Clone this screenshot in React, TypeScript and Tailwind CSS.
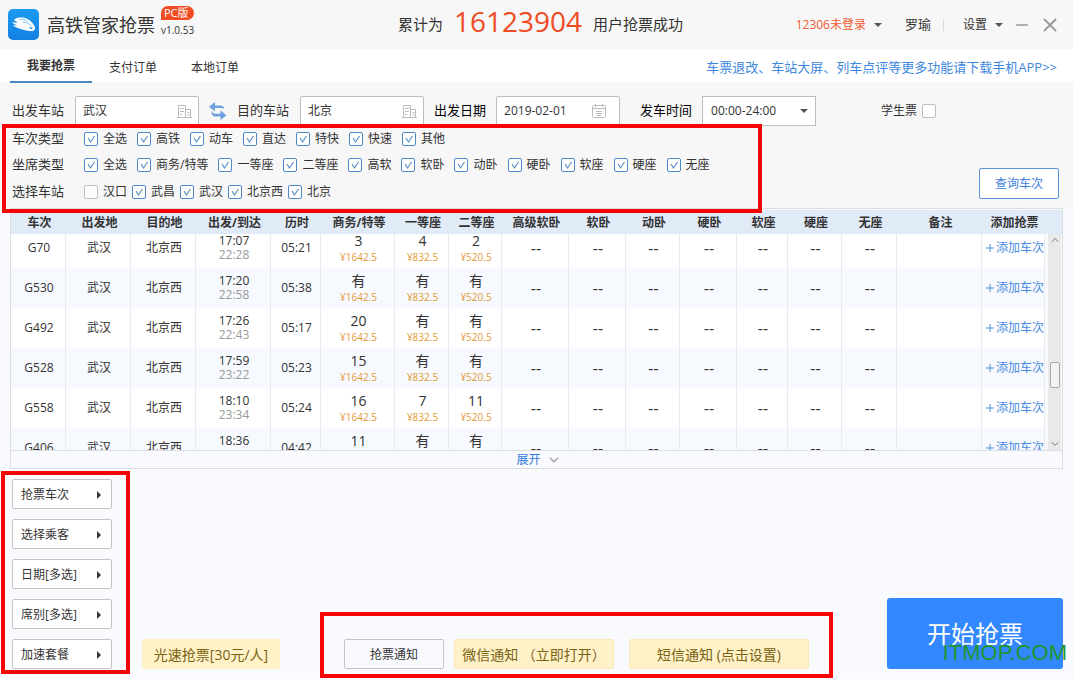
import { useEffect, useRef, useState } from 'react';
import { ChevronDown, ChevronUp, Minus, Plus, X } from 'lucide-react';

const TABS = ['我要抢票', '支付订单', '本地订单'];

const TRAIN_TYPES = ['全选', '高铁', '动车', '直达', '特快', '快速', '其他'];
const SEAT_TYPES = ['全选', '商务/特等', '一等座', '二等座', '高软', '软卧', '动卧', '硬卧', '软座', '硬座', '无座'];
const STATIONS = ['汉口', '武昌', '武汉', '北京西', '北京'];

const COLUMNS = [
    { title: '车次', width: 55 },
    { title: '出发地', width: 65 },
    { title: '目的地', width: 65 },
    { title: '出发/到达', width: 75 },
    { title: '历时', width: 50 },
    { title: '商务/特等', width: 74 },
    { title: '一等座', width: 54 },
    { title: '二等座', width: 53 },
    { title: '高级软卧', width: 67 },
    { title: '软卧', width: 57 },
    { title: '动卧', width: 54 },
    { title: '硬卧', width: 57 },
    { title: '软座', width: 51 },
    { title: '硬座', width: 54 },
    { title: '无座', width: 55 },
    { title: '备注', width: 85 },
    { title: '添加抢票', width: 63 },
];

const TRAINS = [
    { no: 'G70', start: '17:07', end: '22:28', duration: '05:21', seats: ['3', '4', '2'] },
    { no: 'G530', start: '17:20', end: '22:58', duration: '05:38', seats: ['有', '有', '有'] },
    { no: 'G492', start: '17:26', end: '22:43', duration: '05:17', seats: ['20', '有', '有'] },
    { no: 'G528', start: '17:59', end: '23:22', duration: '05:23', seats: ['15', '有', '有'] },
    { no: 'G558', start: '18:10', end: '23:34', duration: '05:24', seats: ['16', '7', '11'] },
    { no: 'G406', start: '18:36', end: '23:18', duration: '04:42', seats: ['11', '有', '有'] },
];

const PRICES = ['¥1642.5', '¥832.5', '¥520.5'];
const EMPTY_SEATS = ['高级软卧', '软卧', '动卧', '硬卧', '软座', '硬座', '无座'];

const STEPS = ['抢票车次', '选择乘客', '日期[多选]', '席别[多选]', '加速套餐'];

function Caret({ className = '' }: { className?: string }) {
    return (
        <svg viewBox="0 0 8 4" className={`w-2 h-1 fill-[#555] ${className}`} aria-hidden="true">
            <path d="M0 0h8L4 4z" />
        </svg>
    );
}

function Logo() {
    return (
        <svg viewBox="0 0 31 31" className="w-[31px] h-[31px] shrink-0" aria-hidden="true">
            <defs>
                <linearGradient id="logo-bg" x1="0" y1="0" x2="0" y2="1">
                    <stop offset="0" stopColor="#1c9bf2" />
                    <stop offset="1" stopColor="#1480e2" />
                </linearGradient>
            </defs>
            <rect width="31" height="31" rx="5" fill="url(#logo-bg)" />
            {/* Train nose */}
            <path d="M6 10.500C10 8 15.500 8 19.500 10c4 2 6.800 5.500 7.500 8.500.6 2.800-2 4-5.500 3.500-6-.9-12-2.500-17-5.500 2 .2 3.500.1 4.500-.3-2-.6-4-1.700-5.200-3.200 2.200.7 4.200.8 5.700.4C8 12.800 6.800 11.800 6 10.500z" fill="#fff" />
            <path d="M11.500 10.800c2.800-.8 5.800-.3 8.200 1.500M14.500 13.200c4 0 7.300 1.500 9.300 4.300" fill="none" stroke="#5db4f5" strokeWidth="0.8" />
            <path d="M20.500 17.800l4.500 1.200-2 1.200z" fill="#1a8eea" />
        </svg>
    );
}

function CityIcon() {
    return (
        <svg viewBox="0 0 16 16" className="w-4 h-4 shrink-0" fill="none" stroke="#bcbcbc" aria-hidden="true">
            <path d="M1.500 14.500v-12h7v12M8.500 6.500h5v8M0 14.500h15" />
            <path d="M3 5.500h4M3 8.500h4M3 11.500h2M10.500 9.500h2M10.500 12h2" />
        </svg>
    );
}

function CalendarIcon() {
    return (
        <svg viewBox="0 0 16 16" className="w-4 h-4 shrink-0" fill="none" stroke="#bcbcbc" aria-hidden="true">
            <rect x="1.500" y="2.500" width="13" height="12" rx="1" />
            <path d="M1.500 5.500h13M4.500 1v3M11.500 1v3M5 8.500h6M5 10.500h6M6 12.500h4" />
        </svg>
    );
}

function SwapIcon() {
    return (
        <svg viewBox="0 0 20 18" className="w-5 h-[18px] fill-[#6f9fdc]" aria-hidden="true">
            <path d="M7 0v3.500h5.500c2 0 3.500 1.200 4 3.500-1.200-.8-2.500-1-4-1H7V9.500L1 4.800z" />
            <path d="M12.500 8.500v3.300H7.500c-2 0-3.500-1.300-4-3.600-.6 3.800 1 6.300 4 6.300h5V18l6-4.700z" />
        </svg>
    );
}

function CheckBox({ label, defaultChecked = true }: { label: string; defaultChecked?: boolean }) {
    return (
        <label className="flex items-center gap-[5px] text-xs text-[#333] whitespace-nowrap">
            <span className="grid">
                <input
                    type="checkbox"
                    defaultChecked={defaultChecked}
                    className="peer col-start-1 row-start-1 appearance-none w-3.5 h-3.5 bg-white border border-[#bdbdbd] checked:border-[#4f8ac8] rounded-[2px]"
                />
                <svg viewBox="0 0 14 14" className="col-start-1 row-start-1 w-3.5 h-3.5 invisible peer-checked:visible pointer-events-none" fill="none" stroke="#5a90cc" strokeWidth="1.2" aria-hidden="true">
                    <path d="M4 6l2.500 4L10.500 4" />
                </svg>
            </span>
            {label}
        </label>
    );
}

function FilterRow({ title, className, children }: { title: string; className: string; children: React.ReactNode }) {
    return (
        <div role="group" aria-label={title} className={`flex items-center ${className}`}>
            <span className="w-[72px] shrink-0 text-[13px] text-[#333]">{title}</span>
            {children}
        </div>
    );
}

function StationField({ id, label, value }: { id: string; label: string; value: string }) {
    return (
        <>
            <label htmlFor={id} className="text-[13px] text-[#333]">{label}</label>
            <div className="flex items-center w-[124px] h-[30px] ml-[11px] pl-[7px] pr-[5px] bg-white border border-[#bdbdbd] rounded-[2px]">
                <input id={id} type="text" defaultValue={value} className="min-w-0 flex-1 text-xs text-[#333] outline-none" />
                <CityIcon />
            </div>
        </>
    );
}

function Header() {
    return (
        <header className="grid grid-cols-[1fr_auto_1fr] items-center h-[49px] pl-2 pr-3 bg-[#f7f7f7] text-[#333]">
            <div className="flex items-center gap-2">
                <Logo />
                <h1 className="text-lg leading-6">高铁管家抢票</h1>
                <div className="flex flex-col -ml-0.5 pb-2 gap-1">
                    <span className="px-[3px] text-[11px] leading-[14px] text-white bg-[#f04b23] rounded-full rounded-bl-none">PC版</span>
                    <span className="text-[10px] leading-3">v1.0.53</span>
                </div>
            </div>

            <p className="flex items-center gap-[11px] pl-3 text-[15px]">
                累计为
                <strong className="pb-2 text-[28px] leading-8 font-normal text-[#f04b23]">16123904</strong>
                用户抢票成功
            </p>

            <div className="flex items-center justify-end text-xs">
                <button type="button" className="flex items-center gap-2 text-[#ee5a31]">
                    12306未登录
                    <Caret />
                </button>
                <span className="ml-[23px] text-[13px]">罗瑜</span>
                <span className="w-px h-3 ml-3 mr-[19px] bg-[#d8d8d8]"></span>
                <button type="button" className="flex items-center gap-2">
                    设置
                    <Caret />
                </button>
                <button type="button" aria-label="最小化" className="ml-2.5">
                    <Minus className="w-[18px] h-[18px] text-[#999]" />
                </button>
                <button type="button" aria-label="关闭" className="ml-2">
                    <X className="w-[22px] h-[22px] text-[#999]" />
                </button>
            </div>
        </header>
    );
}

function NavBar() {
    const [active, setActive] = useState(TABS[0]);

    return (
        <nav className="flex items-center justify-between h-[34px] pl-2.5 pr-4 bg-white border-b border-[#f7f7f7]">
            <div className="flex">
                {TABS.map((tab) => (
                    <button
                        key={tab}
                        type="button"
                        onClick={() => setActive(tab)}
                        className={`w-[82px] h-[34px] text-xs text-[#333] border-b-2 ${tab === active ? 'font-bold border-[#4c87c4] pt-0.5' : 'border-transparent pt-1.5'}`}
                    >
                        {tab}
                    </button>
                ))}
            </div>
            <a href="#app" className="pt-1 text-[13px] text-[#3d87dc]">
                车票退改、车站大屏、列车点评等更多功能请下载手机APP&gt;&gt;
            </a>
        </nav>
    );
}

function SearchForm() {
    return (
        <form className="pt-[13px] pb-0.5 pl-3 pr-3.5 bg-[#f7f7f7]" onSubmit={(e) => e.preventDefault()}>
            <div className="flex items-center">
                <StationField id="from" label="出发车站" value="武汉" />
                <button type="button" aria-label="交换车站" className="mx-[9px]">
                    <SwapIcon />
                </button>
                <StationField id="to" label="目的车站" value="北京" />

                <label htmlFor="date" className="ml-2.5 text-[13px] text-black">出发日期</label>
                <div className="flex items-center w-[124px] h-[30px] ml-2.5 pl-[7px] pr-3 bg-white border border-[#bdbdbd] rounded-[2px]">
                    <input id="date" type="text" defaultValue="2019-02-01" className="min-w-0 flex-1 text-xs text-[#333] outline-none" />
                    <CalendarIcon />
                </div>

                <label htmlFor="time" className="ml-5 text-[13px] text-black">发车时间</label>
                <div className="grid items-center ml-2.5">
                    <select id="time" className="col-start-1 row-start-1 appearance-none w-[114px] h-[30px] pl-2 bg-white border border-[#bdbdbd] text-xs text-[#333]">
                        <option>00:00-24:00</option>
                    </select>
                    <Caret className="col-start-1 row-start-1 justify-self-end mr-2 pointer-events-none" />
                </div>

                <label className="flex items-center gap-[5px] ml-[65px] text-xs text-[#333]">
                    学生票
                    <input type="checkbox" className="appearance-none w-3.5 h-3.5 bg-white border border-[#bdbdbd] rounded-[2px]" />
                </label>
            </div>

            <div className="flex items-end justify-between">
                <div className="relative w-[750px]">
                    <FilterRow title="车次类型" className="h-[26px]">
                        <div className="flex gap-2.5">
                            {TRAIN_TYPES.map((t) => <CheckBox key={t} label={t} />)}
                        </div>
                    </FilterRow>
                    <FilterRow title="坐席类型" className="h-[26px]">
                        <div className="flex gap-2.5">
                            {SEAT_TYPES.map((t) => <CheckBox key={t} label={t} />)}
                        </div>
                    </FilterRow>
                    <FilterRow title="选择车站" className="h-7">
                        <div className="flex gap-[5px]">
                            {STATIONS.map((s) => <CheckBox key={s} label={s} defaultChecked={s !== '汉口'} />)}
                        </div>
                    </FilterRow>
                    <div className="absolute -left-2.5 right-0 -top-0.5 -bottom-[7px] z-20 border-4 border-[#f50505] pointer-events-none"></div>
                </div>
                <button type="submit" className="w-20 h-[31px] mb-[7px] text-xs text-[#3d80dc] bg-white border border-[#5b93dd] rounded-[2px]">
                    查询车次
                </button>
            </div>
        </form>
    );
}

function TrainTable() {
    const scroller = useRef<HTMLDivElement>(null);

    // The list opens slightly scrolled
    useEffect(() => {
        if (scroller.current) scroller.current.scrollTop = 6;
    }, []);

    return (
        <section className="mx-2.5 pt-px border border-[#dcdde0]">
            <div className="flex h-60">
                <div ref={scroller} className="flex-1 min-w-0 overflow-y-scroll [scrollbar-width:none]">
                    <table className="w-full table-fixed border-separate border-spacing-0 text-center text-xs text-[#333]">
                        <colgroup>
                            {COLUMNS.map((c) => <col key={c.title} style={{ width: c.width }} />)}
                        </colgroup>
                        <thead>
                            <tr>
                                {COLUMNS.map((c) => (
                                    <th key={c.title} className="sticky top-0 z-10 h-6 p-0 pt-0.5 pl-0.5 bg-[#e1eaf7] font-bold whitespace-nowrap">{c.title}</th>
                                ))}
                            </tr>
                        </thead>
                        <tbody className="[&_td]:h-10 [&_td]:p-0 [&_td]:pl-0.5 [&_td]:border-r [&_td]:border-[#e8eaed]">
                            {TRAINS.map((train) => (
                                <tr key={train.no} className="bg-white even:bg-[#f6f9fd]">
                                    <td>{train.no}</td>
                                    <td>武汉</td>
                                    <td>北京西</td>
                                    <td>
                                        <div className="leading-[14px]">{train.start}</div>
                                        <div className="leading-[14px] text-[#999]">{train.end}</div>
                                    </td>
                                    <td>{train.duration}</td>
                                    {train.seats.map((seat, i) => (
                                        <td key={PRICES[i]}>
                                            <div className="pt-0.5 text-sm leading-4">{seat}</div>
                                            <div className="text-[10px] leading-4 text-[#e39a35]">{PRICES[i]}</div>
                                        </td>
                                    ))}
                                    {EMPTY_SEATS.map((s) => <td key={s} className="text-base leading-5">--</td>)}
                                    <td></td>
                                    <td>
                                        <button type="button" className="flex items-center text-[#4a8be0] whitespace-nowrap">
                                            <Plus className="w-3 h-3" />
                                            添加车次
                                        </button>
                                    </td>
                                </tr>
                            ))}
                        </tbody>
                    </table>
                </div>

                {/* Scroll bar */}
                <div className="flex flex-col w-[17px]">
                    <div className="h-6 shrink-0 bg-[#e1eaf7]"></div>
                    <div className="flex flex-col items-center flex-1 ml-[3px] mr-px bg-[#e9e9e9]">
                        <ChevronUp className="w-3 h-3 text-[#777]" />
                        <div className="grow-[7]"></div>
                        <div className="w-2.5 h-[26px] bg-[#f3f3f3] border border-[#a9a9a9] rounded-[2px]"></div>
                        <div className="grow-[3]"></div>
                        <ChevronDown className="w-3 h-3 text-[#777]" />
                    </div>
                </div>
            </div>
            <button type="button" className="flex items-center justify-center gap-1.5 w-full h-[18px] pl-1 border-t border-[#dcdde0] text-xs leading-4 text-[#2f78d8]">
                展开
                <ChevronDown className="w-3.5 h-3.5 text-[#aaa]" strokeWidth={3} />
            </button>
        </section>
    );
}

function ActionArea() {
    return (
        <section className="flex items-end py-2.5 pl-3 pr-2.5">
            <div className="relative flex flex-col gap-2.5 w-[100px]">
                {STEPS.map((step) => (
                    <button key={step} type="button" className="flex items-center justify-between h-[30px] pt-0.5 pl-2 pr-2.5 text-xs text-[#333] bg-white border border-[#c4c4c4] rounded-[2px]">
                        {step}
                        <svg viewBox="0 0 4 8" className="w-1 h-2 fill-[#333]" aria-hidden="true">
                            <path d="M0 0v8l4-4z" />
                        </svg>
                    </button>
                ))}
                <div className="absolute -left-[11px] -right-[18px] -top-2 -bottom-[5px] border-4 border-[#f50505] pointer-events-none"></div>
            </div>

            <button type="button" className="w-[138px] h-[30px] ml-[30px] pt-0.5 text-sm text-[#7a6212] bg-[#fff1c8]">
                光速抢票[30元/人]
            </button>

            <div className="relative flex ml-16">
                <button type="button" className="w-[100px] h-[30px] pt-0.5 text-xs text-[#333] border border-[#c4c4c4] rounded-[2px]">
                    抢票通知
                </button>
                <button type="button" className="w-40 h-[30px] ml-2.5 pt-0.5 text-sm text-[#7a6212] bg-[#fff1c8] border border-[#fbeab8] rounded-[2px] whitespace-nowrap">
                    微信通知 （立即打开）
                </button>
                <button type="button" className="w-[180px] h-[30px] ml-[15px] pt-0.5 text-sm text-[#7a6212] bg-[#fff1c8] border border-[#fbeab8] rounded-[2px]">
                    短信通知 (点击设置)
                </button>
                <div className="absolute -left-6 -right-6 -top-[27px] -bottom-[9px] border-4 border-[#f50505] pointer-events-none"></div>
            </div>

            <div className="relative ml-auto">
                <button type="button" className="w-44 h-[71px] text-2xl text-white bg-[#3388ff] rounded-[3px]">
                    开始抢票
                </button>
                <span className="absolute -right-1 bottom-1 text-[22px] leading-6 text-[#1f9530] font-['Liberation_Sans',sans-serif] pointer-events-none">
                    ITMOP.COM
                </span>
            </div>
        </section>
    );
}

export default function App() {
    return (
        <div className="min-h-screen bg-[#f8fafe] font-['Open_Sans','Noto_Sans_CJK_SC',sans-serif]">
            <Header />
            <NavBar />
            <main>
                <SearchForm />
                <TrainTable />
                <ActionArea />
            </main>
        </div>
    );
}
